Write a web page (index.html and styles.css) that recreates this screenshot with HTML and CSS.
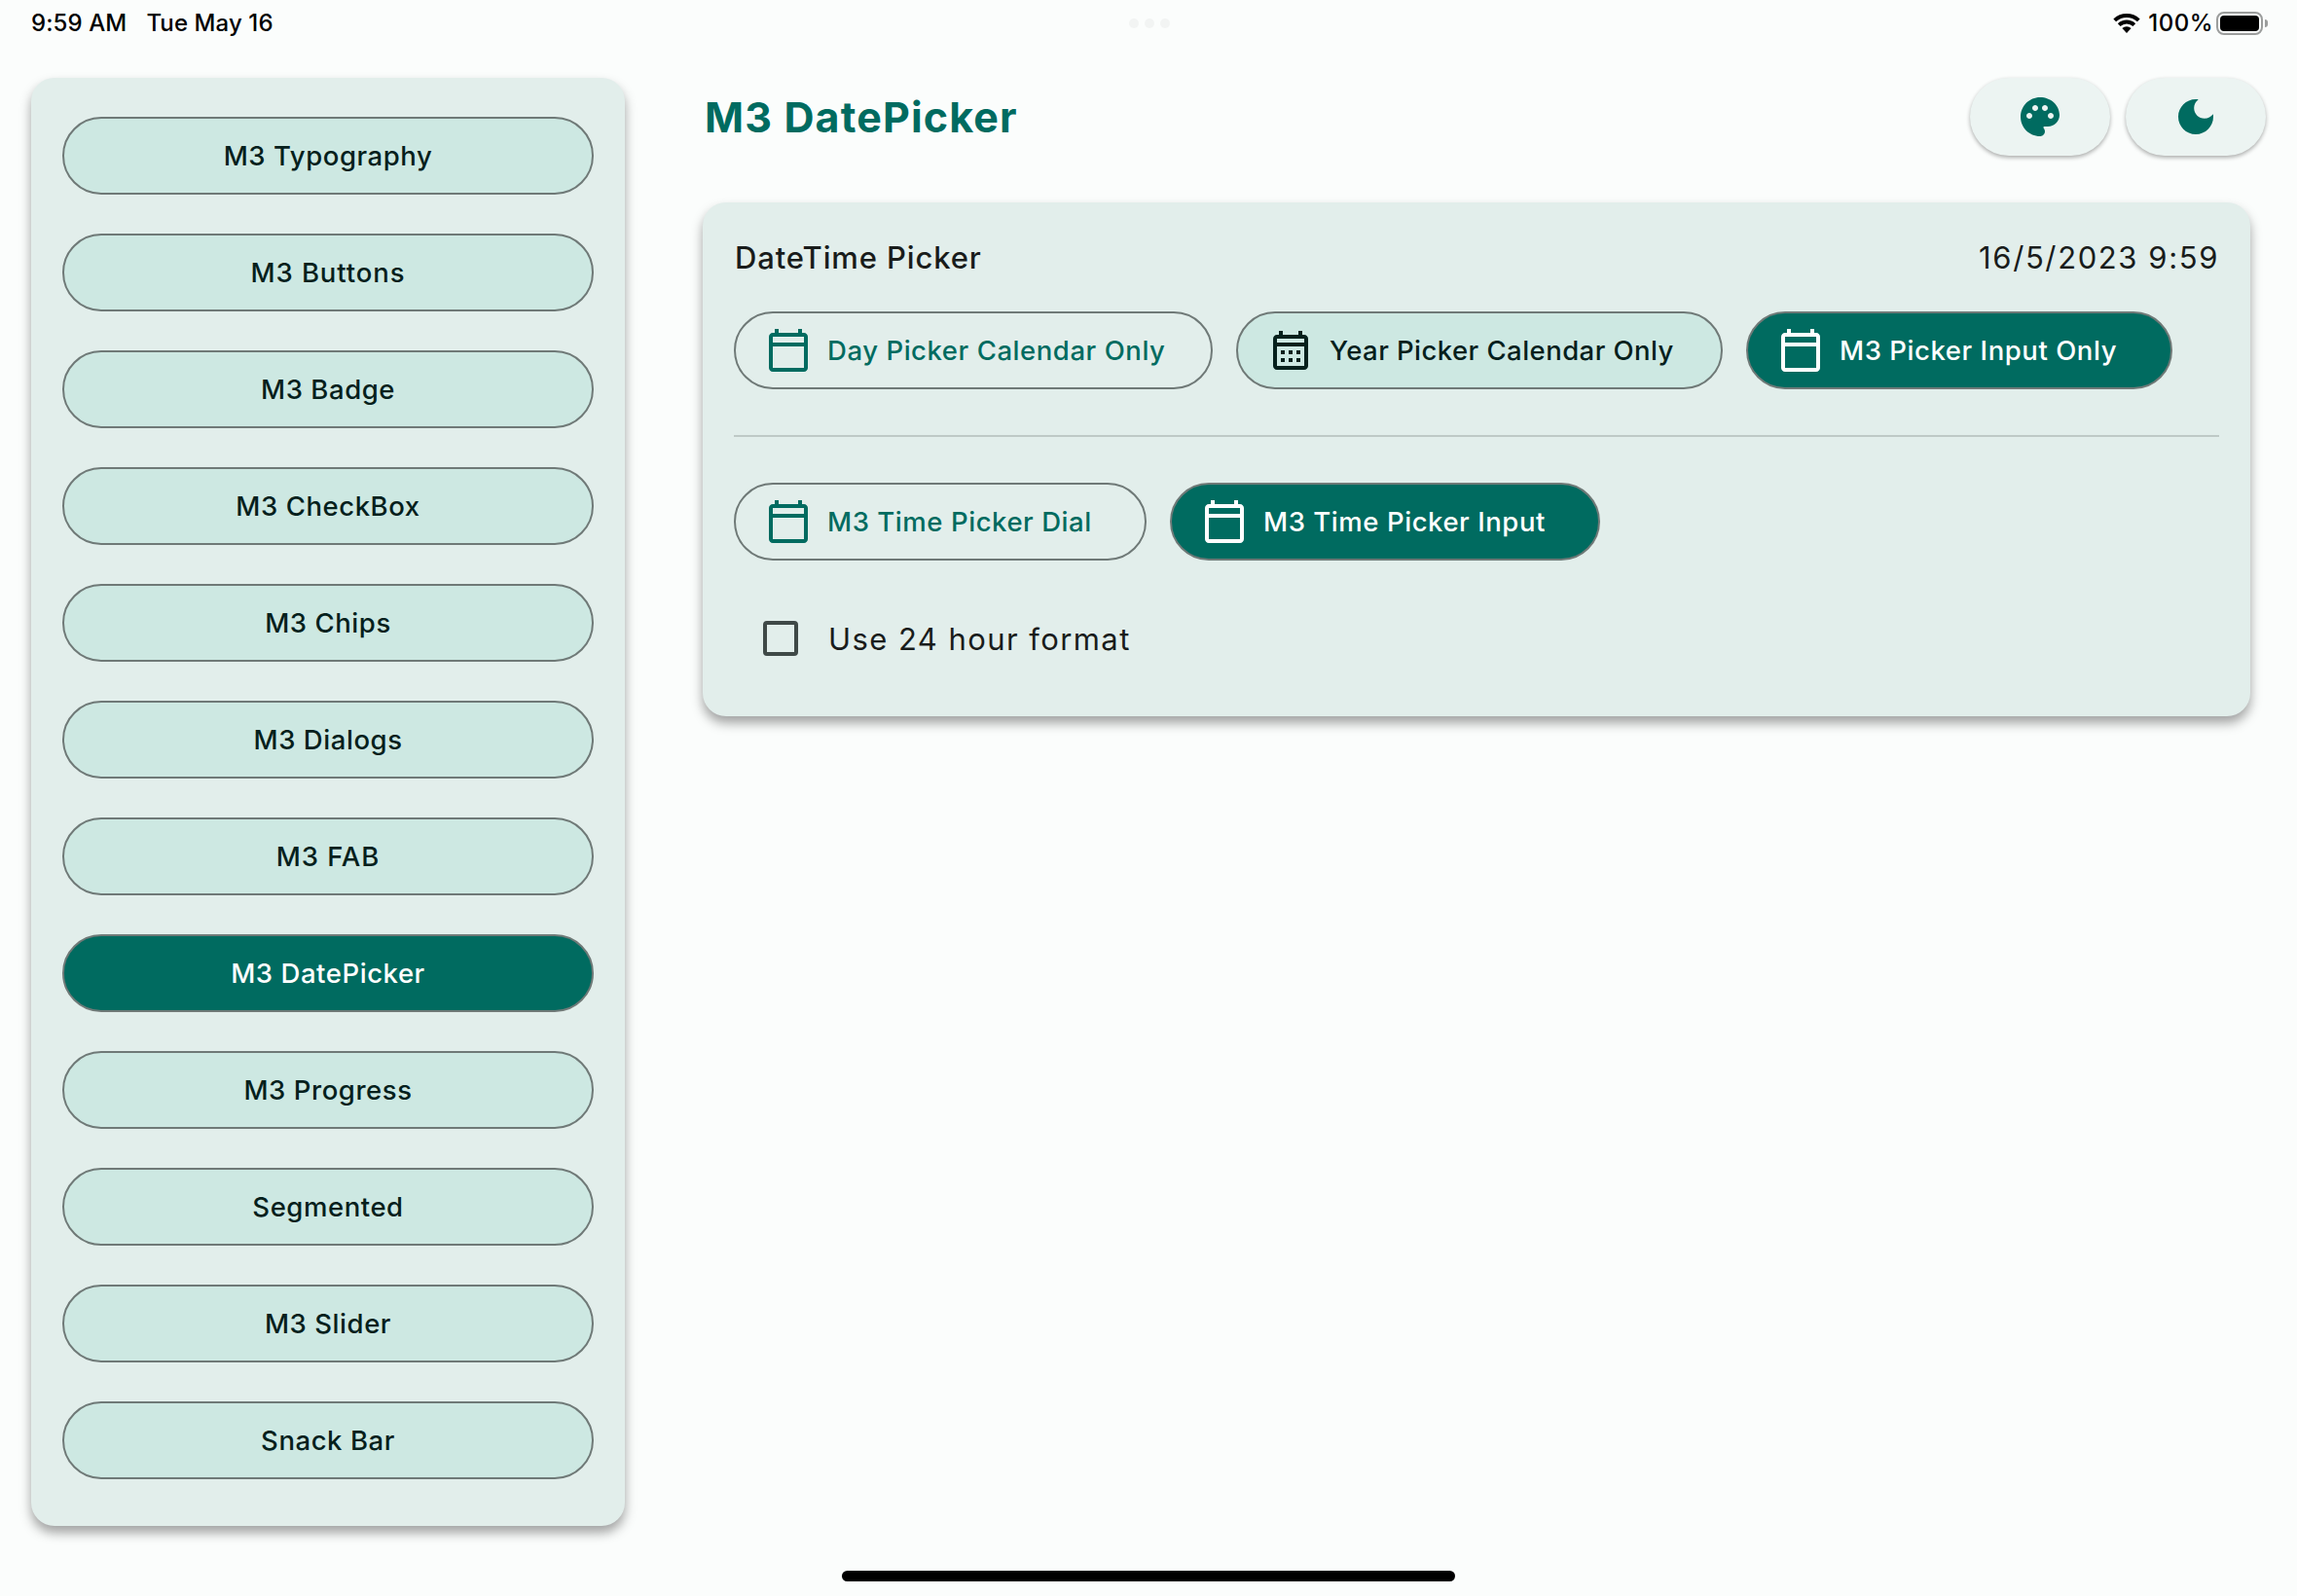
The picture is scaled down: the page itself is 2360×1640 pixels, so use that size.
FILE: index.html
```html
<!DOCTYPE html>
<html lang="en">
<head>
<meta charset="utf-8">
<title>M3 DatePicker</title>
<link rel="stylesheet" href="styles.css">
</head>
<body>
<svg class="sprite" aria-hidden="true">
  <symbol id="calendar" viewBox="0 0 24 24"><path d="M20 3h-1V1h-2v2H7V1H5v2H4c-1.1 0-2 .9-2 2v16c0 1.1.9 2 2 2h16c1.1 0 2-.9 2-2V5c0-1.1-.9-2-2-2zm0 18H4V10h16v11zm0-13H4V5h16v3z"/></symbol>
  <symbol id="calendar-month" viewBox="0 0 24 24"><path d="M19 4h-1V2h-2v2H8V2H6v2H5c-1.11 0-1.99.9-1.99 2L3 20c0 1.1.89 2 2 2h14c1.1 0 2-.9 2-2V6c0-1.1-.9-2-2-2zm0 16H5V10h14v10zm0-12H5V6h14v2zM9 14H7v-2h2v2zm4 0h-2v-2h2v2zm4 0h-2v-2h2v2zm-8 4H7v-2h2v2zm4 0h-2v-2h2v2zm4 0h-2v-2h2v2z"/></symbol>
</svg>

<header class="status">
  <div class="status-side">
    <span>9:59 AM</span>
    <span>Tue May 16</span>
  </div>
  <div class="dots"><i></i><i></i><i></i></div>
  <div class="status-side status-right">
    <svg class="wifi" viewBox="0 0 28 20"><path d="M14 20 9.4 15.1A6.7 6.7 0 0 1 18.6 15.1Z"/><path class="arc" d="M1.72 6.84A18 18 0 0 1 26.28 6.84"/><path class="arc" d="M6.2 11.66A11.4 11.4 0 0 1 21.8 11.66"/></svg>
    <span class="percent">100%</span>
    <span class="battery"><span class="battery-body"><span class="battery-level"></span></span><span class="battery-cap"></span></span>
  </div>
</header>

<div class="app">
  <nav class="sidebar">
    <button class="pill tonal">M3 Typography</button>
    <button class="pill tonal wide">M3 Buttons</button>
    <button class="pill tonal">M3 Badge</button>
    <button class="pill tonal">M3 CheckBox</button>
    <button class="pill tonal">M3 Chips</button>
    <button class="pill tonal">M3 Dialogs</button>
    <button class="pill tonal wide">M3 FAB</button>
    <button class="pill filled">M3 DatePicker</button>
    <button class="pill tonal">M3 Progress</button>
    <button class="pill tonal">Segmented</button>
    <button class="pill tonal">M3 Slider</button>
    <button class="pill tonal">Snack Bar</button>
  </nav>

  <main class="content">
    <div class="title-bar">
      <h1>M3 DatePicker</h1>
      <div class="actions">
        <button class="elevated" aria-label="Palette"><svg viewBox="0 0 24 24"><path d="M12 2C6.49 2 2 6.49 2 12s4.49 10 10 10c1.38 0 2.5-1.12 2.5-2.5 0-.61-.23-1.2-.64-1.67-.08-.1-.13-.21-.13-.33 0-.28.22-.5.5-.5H16c3.31 0 6-2.69 6-6 0-4.96-4.49-9-10-9zm5.5 11c-.83 0-1.5-.67-1.5-1.5s.67-1.5 1.5-1.5 1.5.67 1.5 1.5-.67 1.5-1.5 1.5zm-3-4c-.83 0-1.5-.67-1.5-1.5S13.67 6 14.5 6s1.5.67 1.5 1.5S15.33 9 14.5 9zM5 11.5c0-.83.67-1.5 1.5-1.5s1.5.67 1.5 1.5S7.33 13 6.5 13 5 12.33 5 11.5zm6-4c0 .83-.67 1.5-1.5 1.5S8 8.33 8 7.5 8.67 6 9.5 6s1.5.67 1.5 1.5z"/></svg></button>
        <button class="elevated" aria-label="Dark mode"><svg viewBox="0 0 24 24"><path d="M12 3c-4.97 0-9 4.03-9 9s4.03 9 9 9 9-4.03 9-9c0-.46-.04-.92-.1-1.36-.98 1.37-2.58 2.26-4.4 2.26-2.98 0-5.4-2.42-5.4-5.4 0-1.81.89-3.42 2.26-4.4C12.92 3.04 12.46 3 12 3z"/></svg></button>
      </div>
    </div>

    <section class="card">
      <div class="card-head">
        <h2>DateTime Picker</h2>
        <span class="value">16/5/2023 9:59</span>
      </div>
      <div class="row">
        <button class="pill w-day outlined"><svg><use href="#calendar"/></svg>Day Picker Calendar Only</button>
        <button class="pill w-year tonal"><svg><use href="#calendar-month"/></svg>Year Picker Calendar Only</button>
        <button class="pill w-input filled"><svg><use href="#calendar"/></svg>M3 Picker Input Only</button>
      </div>
      <hr>
      <div class="row">
        <button class="pill w-dial outlined"><svg><use href="#calendar"/></svg>M3 Time Picker Dial</button>
        <button class="pill w-time filled"><svg><use href="#calendar"/></svg>M3 Time Picker Input</button>
      </div>
      <label class="check"><span class="box"></span>Use 24 hour format</label>
    </section>
  </main>
</div>

<footer class="home"><span></span></footer>
</body>
</html>
```
FILE: styles.css
```css
* {
  box-sizing: border-box;
}

body {
  margin: 0;
  width: 2360px;
  height: 1640px;
  display: flex;
  flex-direction: column;
  overflow: hidden;
  background: #fbfdfc;
  color: #191c1b;
  font-family: "Inter", "Liberation Sans", sans-serif;
}

button {
  margin: 0;
  border: 0;
  font: inherit;
}

.sprite {
  display: none;
}

/* Status bar */
.status {
  display: grid;
  grid-template-columns: 1fr auto 1fr;
  align-items: center;
  height: 48px;
  padding: 0 30px 0 32px;
  color: #000;
  font-size: 24px;
  font-weight: 500;
  line-height: 28px;
  letter-spacing: 0.1px;
}

.status-side {
  display: flex;
  align-items: center;
  gap: 20px;
}

.status-right {
  justify-content: flex-end;
  gap: 0;
}

.dots {
  display: flex;
  gap: 6px;
}

.dots i {
  width: 10px;
  height: 10px;
  border-radius: 50%;
  background: #f2f4f3;
}

.wifi {
  width: 28px;
  height: 20px;
  margin-right: 8px;
}

.wifi .arc {
  fill: none;
  stroke: #000;
  stroke-width: 4;
}

.percent {
  letter-spacing: 0.5px;
  margin-right: 3px;
}

.battery {
  display: flex;
  align-items: center;
  gap: 2px;
}

.battery-body {
  display: flex;
  width: 48px;
  height: 24px;
  padding: 2px;
  border: 2px solid #9b9d9c;
  border-radius: 8px;
}

.battery-level {
  flex: 1;
  border-radius: 4px;
  background: #000;
}

.battery-cap {
  width: 3px;
  height: 8px;
  border-radius: 0 3px 3px 0;
  background: #9b9d9c;
}

/* Layout */
.app {
  flex: 1;
  display: flex;
  align-items: flex-start;
  gap: 80px;
  padding: 32px 32px 0;
}

.sidebar {
  flex: none;
  display: flex;
  flex-direction: column;
  gap: 40px;
  width: 610px;
  height: 1488px;
  padding: 40px 32px;
  border-radius: 24px;
  background: #e2eeeb;
  box-shadow: 0 7px 12px rgba(0, 0, 0, 0.36);
}

.content {
  flex: 1;
  min-width: 0;
}

/* Pill buttons */
.pill {
  display: flex;
  align-items: center;
  justify-content: center;
  flex: none;
  height: 80px;
  border: 2px solid #6f7977;
  border-radius: 40px;
  background: transparent;
  font-size: 27.5px;
  font-weight: 500;
  letter-spacing: 0.56px;
  white-space: nowrap;
}

.wide {
  letter-spacing: 0.9px;
}

.tonal {
  background: #cde8e2;
  color: #05201c;
}

.filled {
  background: #006b60;
  color: #fff;
}

.outlined {
  color: #006b60;
}

/* Title bar */
.title-bar {
  display: flex;
  align-items: center;
  justify-content: space-between;
  height: 80px;
  padding-left: 2px;
}

h1 {
  margin: 0;
  color: #006b60;
  font-size: 43px;
  font-weight: 700;
  letter-spacing: 1.14px;
}

.actions {
  display: flex;
  gap: 16px;
}

.elevated {
  display: flex;
  align-items: center;
  justify-content: center;
  width: 144px;
  height: 80px;
  border-radius: 40px;
  background: #ecf4f2;
  color: #006b60;
  box-shadow: 0 2px 4px rgba(0, 0, 0, 0.32);
}

.elevated svg {
  width: 48px;
  height: 48px;
  fill: currentColor;
}

/* Picker card */
.card {
  height: 528px;
  margin: 48px 16px 0 0;
  padding: 0 32px;
  border-radius: 24px;
  background: #e2eeeb;
  box-shadow: 0 7px 12px rgba(0, 0, 0, 0.36);
}

.card-head {
  display: flex;
  align-items: center;
  justify-content: space-between;
  height: 112px;
  padding: 1px 0 0 1px;
}

h2 {
  margin: 0;
  font-size: 31px;
  font-weight: 500;
  letter-spacing: 0.88px;
}

.value {
  font-size: 31px;
  font-weight: 400;
  letter-spacing: 1.6px;
}

.row {
  display: flex;
  gap: 24px;
}

.row .pill {
  justify-content: flex-start;
  padding: 0 0 0 30px;
}

.row svg {
  width: 48px;
  height: 48px;
  margin-right: 16px;
  fill: currentColor;
}

.w-day {
  width: 492px;
}

.w-year {
  width: 500px;
}

.row .w-year {
  letter-spacing: 0.45px;
}

.w-input {
  width: 438px;
}

.w-dial {
  width: 424px;
}

.w-time {
  width: 442px;
}

hr {
  height: 2px;
  margin: 47px 0;
  border: 0;
  background: #bec9c6;
}

.check {
  display: flex;
  align-items: center;
  gap: 31px;
  height: 96px;
  margin-top: 32px;
  padding-left: 30px;
  font-size: 31px;
  font-weight: 400;
  letter-spacing: 1.43px;
}

.box {
  width: 36px;
  height: 36px;
  border: 4px solid #3f4947;
  border-radius: 4px;
}

/* Home indicator */
.home {
  display: flex;
  justify-content: center;
  height: 26px;
}

.home span {
  width: 630px;
  height: 11px;
  border-radius: 6px;
  background: #000;
}
```
